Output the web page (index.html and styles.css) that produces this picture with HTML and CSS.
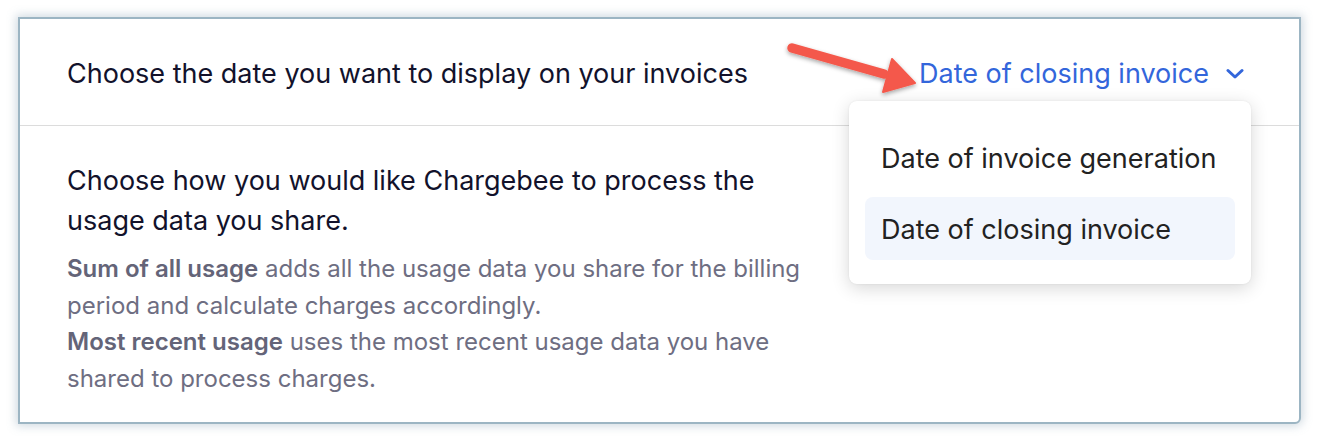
FILE: index.html
```html
<!DOCTYPE html>
<html>
<head>
<meta charset="utf-8">
<link rel="stylesheet" href="styles.css">
</head>
<body>
<div class="frame">
  <div class="header">
    <div class="title">Choose the date you want to display on your invoices</div>
    <div class="select">
      <span class="select-label">Date of closing invoice</span>
      <svg class="chevron" width="18" height="12" viewBox="0 0 18 12"><path d="M2 2.5 L9 9 L16 2.5" fill="none" stroke="#3366db" stroke-width="3" stroke-linecap="round" stroke-linejoin="round"/></svg>
    </div>
  </div>
  <div class="body">
    <p class="lead">Choose how you would like Chargebee to process the usage data you share.</p>
    <p class="desc"><b>Sum of all usage</b> adds all the usage data you share for the billing period and calculate charges accordingly.<br><b>Most recent usage</b> uses the most recent usage data you have shared to process charges.</p>
  </div>
  <div class="menu">
    <div class="menu-item">Date of invoice generation</div>
    <div class="menu-item active">Date of closing invoice</div>
  </div>
  <svg class="arrow" width="150" height="70" viewBox="0 0 150 70">
    <defs>
      <filter id="sh" x="-20%" y="-40%" width="140%" height="180%">
        <feDropShadow dx="0" dy="2" stdDeviation="2" flood-color="#000" flood-opacity="0.35"/>
      </filter>
    </defs>
    <g filter="url(#sh)">
      <line x1="12" y1="11" x2="104" y2="37" stroke="#f4594b" stroke-width="9.5" stroke-linecap="round"/>
      <path d="M112 22 L135 46 L103 55 Z" fill="#f4594b" stroke="#f4594b" stroke-width="2" stroke-linejoin="round"/>
    </g>
  </svg>
</div>
</body>
</html>
```
FILE: styles.css
```css
html, body {
  margin: 0;
  padding: 0;
  background: #ffffff;
}
body {
  font-family: Inter, "Noto Sans", sans-serif;
  width: 1319px;
  height: 442px;
  overflow: hidden;
}
.frame {
  position: relative;
  margin: 17px 0 0 18px;
  width: 1279px;
  height: 403px;
  border: 2px solid #9cb5c3;
  border-radius: 0 0 6px 0;
  box-shadow: 0 0 10px 2px rgba(120, 150, 170, 0.35);
  background: #fff;
}
.header {
  height: 107px;
  border-bottom: 1px solid #dcdcdc;
  display: flex;
  align-items: center;
  justify-content: space-between;
  padding: 2px 55px 0 47px;
  box-sizing: border-box;
}
.title {
  font-size: 27px;
  color: #12122b;
}
.select {
  display: flex;
  align-items: center;
  gap: 17px;
  color: #3366db;
  font-size: 27px;
}
.chevron {
  margin-top: 2px;
}
.body {
  padding: 35px 0 0 47px;
  width: 752px;
}
.lead {
  margin: 0;
  font-size: 27px;
  line-height: 40px;
  color: #12122b;
}
.desc {
  margin: 10px 0 0;
  font-size: 24px;
  line-height: 36.5px;
  color: #6e6e82;
}
.desc b {
  font-weight: 600;
  color: #646478;
}
.menu {
  position: absolute;
  left: 829px;
  top: 82px;
  width: 402px;
  height: 183px;
  box-sizing: border-box;
  padding: 24px 16px;
  background: #fff;
  border-radius: 8px;
  box-shadow: 0 4px 18px rgba(0, 0, 0, 0.16), 0 0 2px rgba(0, 0, 0, 0.08);
  display: flex;
  flex-direction: column;
  justify-content: flex-end;
  gap: 8px;
}
.menu-item {
  height: 64px;
  box-sizing: border-box;
  display: flex;
  align-items: center;
  padding: 3px 0 0 16px;
  font-size: 27px;
  color: #222;
  border-radius: 8px;
}
.menu-item.active {
  background: #f2f6fd;
}
.arrow {
  position: absolute;
  left: 760px;
  top: 18px;
}
```
